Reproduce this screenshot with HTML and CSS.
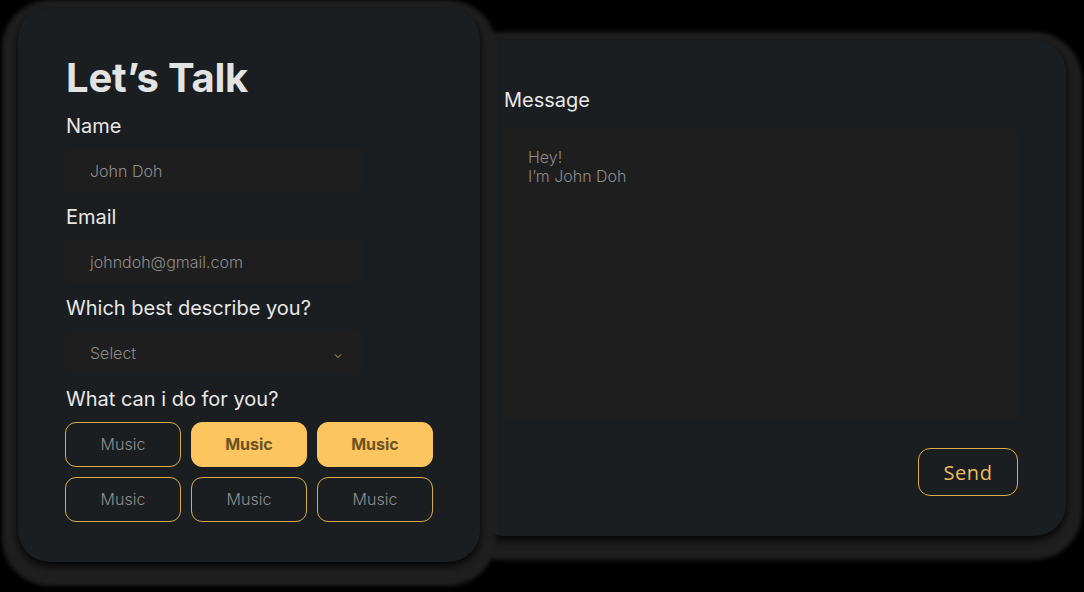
FILE: index.html
```html
<!DOCTYPE html>
<html lang="en">
<head>
<meta charset="utf-8">
<title>Let's Talk</title>
<link rel="stylesheet" href="styles.css">
</head>
<body>
<main class="stage">
  <section class="card card-left">
    <h1 class="title">Let’s Talk</h1>
    <label class="label">Name</label>
    <div class="field">John Doh</div>
    <label class="label">Email</label>
    <div class="field">johndoh@gmail.com</div>
    <label class="label">Which best describe you?</label>
    <div class="field field-select">
      <span>Select</span>
      <svg class="chev" width="8" height="6" viewBox="0 0 8 6"><polyline points="1,1.5 4,4.5 7,1.5" fill="none" stroke="#d2a94c" stroke-width="1"/></svg>
    </div>
    <label class="label">What can i do for you?</label>
    <div class="chips">
      <button class="chip">Music</button>
      <button class="chip chip-on">Music</button>
      <button class="chip chip-on">Music</button>
      <button class="chip">Music</button>
      <button class="chip">Music</button>
      <button class="chip">Music</button>
    </div>
  </section>
  <section class="card card-right">
    <label class="label">Message</label>
    <div class="textarea">Hey!<br>I’m John Doh</div>
    <div class="actions"><button class="send">Send</button></div>
  </section>
</main>
</body>
</html>
```
FILE: styles.css
```css
* { box-sizing: border-box; }
html, body { margin: 0; padding: 0; }
body {
  background: #000;
  width: 1084px;
  height: 592px;
  overflow: hidden;
  font-family: Inter, "Noto Sans", sans-serif;
}
.stage {
  display: flex;
  align-items: flex-start;
  padding: 8px 0 0 18px;
}
.card {
  background: #1b1e21;
  border-radius: 32px;
  box-shadow: 0 4px 8px rgba(0,0,0,0.9), 0 8px 4px 16px #1f1f1f;
}
.card-left {
  position: relative;
  z-index: 2;
  width: 462px;
  height: 554px;
  padding: 46px 0 0 48px;
  display: flex;
  flex-direction: column;
}
.card-right {
  position: relative;
  z-index: 1;
  margin: 32px 0 0 -10px;
  width: 596px;
  height: 496px;
  padding: 48px 48px 0 34px;
  display: flex;
  flex-direction: column;
}
.title {
  margin: 0 0 12px;
  font-size: 40px;
  line-height: 48px;
  font-weight: 700;
  color: #e3e3e3;
  letter-spacing: -0.2px;
}
.label {
  display: block;
  font-size: 20px;
  line-height: 24px;
  font-weight: 400;
  color: #e8e8e8;
  margin-bottom: 10px;
}
.field {
  width: 300px;
  height: 44px;
  margin-left: -2px;
  margin-bottom: 13px;
  border-radius: 8px;
  background: #1e1e1e;
  padding: 1px 26px 0;
  display: flex;
  align-items: center;
  font-size: 16px;
  font-weight: 300;
  color: #8c8c8c;
}
.field-select { justify-content: space-between; padding-right: 22px; }
.chev { margin-top: 6px; }
.chips {
  margin-top: 1px;
  margin-left: -1px;
  display: grid;
  grid-template-columns: repeat(3, 116px);
  grid-auto-rows: 45px;
  gap: 10px;
}
.chip {
  border: 1px solid #d6aa50;
  border-radius: 11px;
  background: transparent;
  font-family: Inter, "Noto Sans", sans-serif;
  font-size: 16px;
  font-weight: 300;
  color: #8e8e8e;
  padding: 0 0 2px;
}
.chip-on {
  background: #fdc55f;
  border-color: #fdc55f;
  color: #6b5322;
  font-weight: 700;
}
.card-right .label { margin-bottom: 15px; }
.textarea {
  width: 514px;
  height: 293px;
  background: #1e1e1e;
  border-radius: 4px;
  padding: 21px 24px;
  font-size: 16px;
  line-height: 19px;
  font-weight: 300;
  color: #8c8c8c;
}
.actions {
  display: flex;
  justify-content: flex-end;
  margin-top: 28px;
}
.send {
  width: 100px;
  height: 48px;
  border: 1px solid #d8aa4e;
  border-radius: 12px;
  background: transparent;
  font-family: "Open Sans", sans-serif;
  font-size: 20px;
  font-weight: 400;
  letter-spacing: 0.6px;
  color: #ebbd5e;
  padding: 0;
}
```
